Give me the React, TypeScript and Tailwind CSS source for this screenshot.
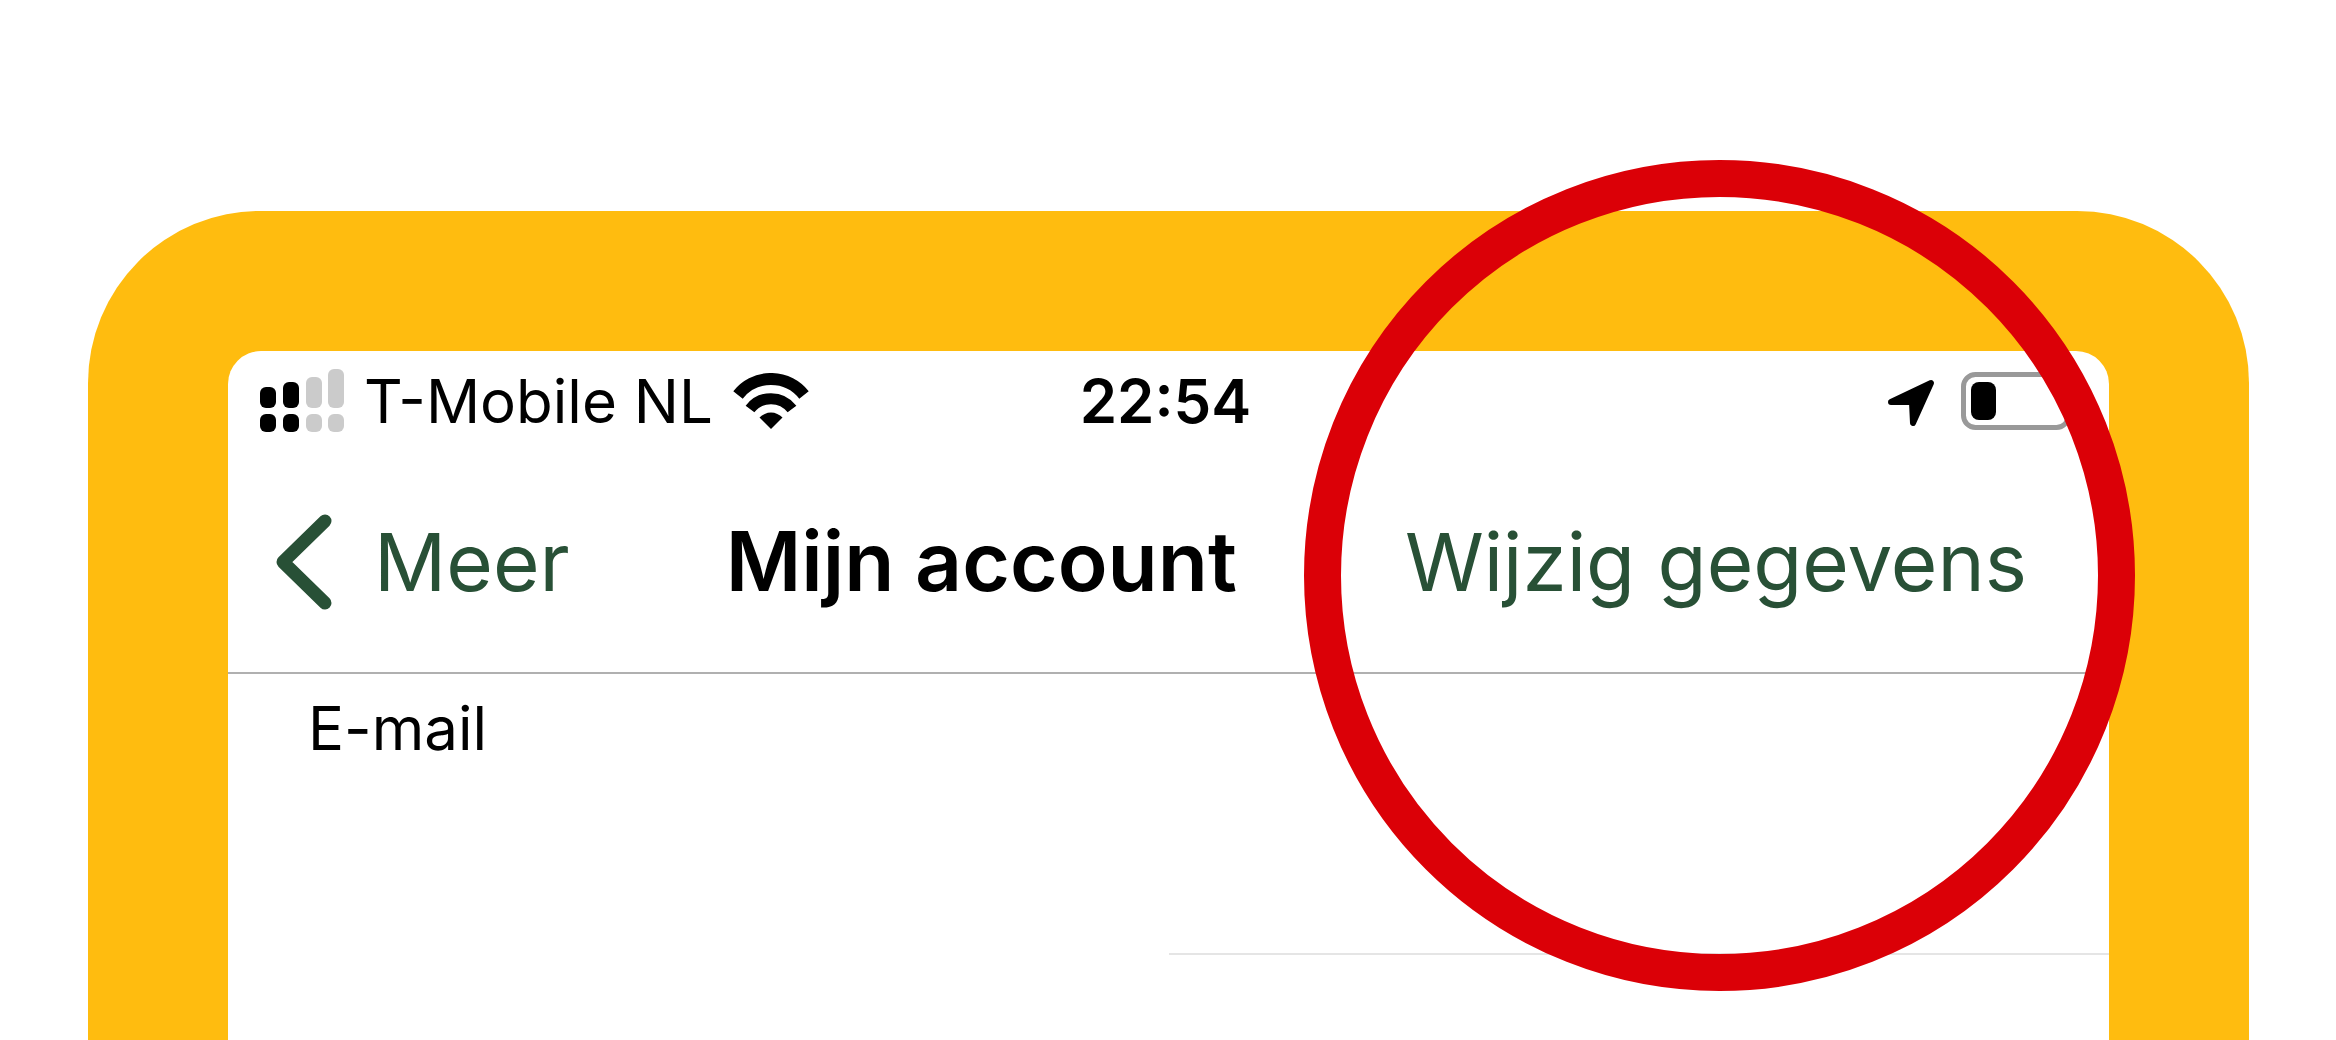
function SignalIcon() {
  return (
    <svg className="h-16 w-21" viewBox="0 0 84 64" role="img" aria-label="Signaal">
      <g fill="#000">
        <rect x="0" y="18" width="16" height="21" rx="6" />
        <rect x="23" y="13" width="16" height="26" rx="6" />
        <rect x="0" y="45" width="16" height="18" rx="6" />
        <rect x="23" y="45" width="16" height="18" rx="6" />
      </g>
      <g fill="#cbcbcb">
        <rect x="46" y="8" width="16" height="31" rx="6" />
        <rect x="68" y="0" width="16" height="39" rx="6" />
        <rect x="46" y="45" width="16" height="18" rx="6" />
        <rect x="68" y="45" width="16" height="18" rx="6" />
      </g>
    </svg>
  );
}

function WifiIcon() {
  return (
    <svg className="h-14 w-19" viewBox="0 0 76 56" role="img" aria-label="Wifi">
      <path d="M5 22A42 42 0 0 1 71 22" fill="none" stroke="#000" strokeWidth="12" />
      <path d="M17 36A26.500 26.500 0 0 1 59 36" fill="none" stroke="#000" strokeWidth="11" />
      <path d="M38 56L26.500 44.500A16 16 0 0 1 49.500 44.500Z" fill="#000" />
    </svg>
  );
}

function LocationIcon() {
  return (
    <svg className="h-14 w-[50px]" viewBox="0 0 50 56" role="img" aria-label="Locatie">
      <path
        d="M4 29L44 10L26 50L25 29Z"
        fill="#000"
        stroke="#000"
        strokeWidth="6"
        strokeLinejoin="round"
      />
    </svg>
  );
}

function BatteryIcon() {
  return (
    <svg className="h-[58px] w-[110px]" viewBox="0 0 110 58" role="img" aria-label="Batterij">
      <rect x="2.500" y="2.500" width="105" height="53" rx="12" fill="none" stroke="#999" strokeWidth="5" />
      <rect x="10" y="10" width="25" height="38" rx="8" fill="#000" />
    </svg>
  );
}

function StatusBar() {
  return (
    <div className="grid grid-cols-[1fr_auto_1fr] items-center pt-[15px] pr-[38px] pl-8 text-[60px] leading-[70px]">
      <div className="flex items-center">
        <SignalIcon />
        <span className="ml-5 whitespace-nowrap">T-Mobile NL</span>
        <span className="ml-5">
          <WifiIcon />
        </span>
      </div>
      <time className="font-semibold">22:54</time>
      <div className="flex items-center justify-end gap-6">
        <LocationIcon />
        <BatteryIcon />
      </div>
    </div>
  );
}

function NavBar() {
  return (
    <nav className="relative flex items-center justify-between border-b-2 border-[#b0b0b0] pt-[76px] pr-[82px] pb-[60px] pl-12 text-[80px] leading-[100px]">
      <button className="flex cursor-pointer items-center gap-[42px] text-[#285036]">
        <svg className="h-24 w-14" viewBox="0 0 56 96" fill="none" aria-hidden="true">
          <path
            d="M49 7L7 48L49 89"
            stroke="currentColor"
            strokeWidth="13"
            strokeLinecap="round"
            strokeLinejoin="round"
          />
        </svg>
        Meer
      </button>
      <h1 className="mr-3 text-[82px] font-semibold">Mijn account</h1>
      <button className="cursor-pointer text-[#285036]">Wijzig gegevens</button>

      {/* Highlight ring around the edit button */}
      <div className="pointer-events-none absolute -top-[276px] -right-[26px] size-[831px] rounded-full border-[37px] border-[#db0007]" />
    </nav>
  );
}

export default function App() {
  return (
    <main className="flex min-h-screen flex-col overflow-hidden bg-white pt-[211px] pr-[87px] pl-[88px] font-[Inter,sans-serif] text-black">
      <div className="flex flex-1 flex-col rounded-t-[172px] bg-[#ffbc0f] px-[140px] pt-[140px]">
        <div className="flex-1 rounded-t-[33px] bg-white">
          <StatusBar />
          <NavBar />
          <section>
            <h2 className="pt-[19px] pl-20 text-[60px] leading-[70px]">E-mail</h2>
            <hr className="mt-[190px] ml-auto w-1/2 border-t-2 border-[#e5e5e5]" />
          </section>
        </div>
      </div>
    </main>
  );
}
